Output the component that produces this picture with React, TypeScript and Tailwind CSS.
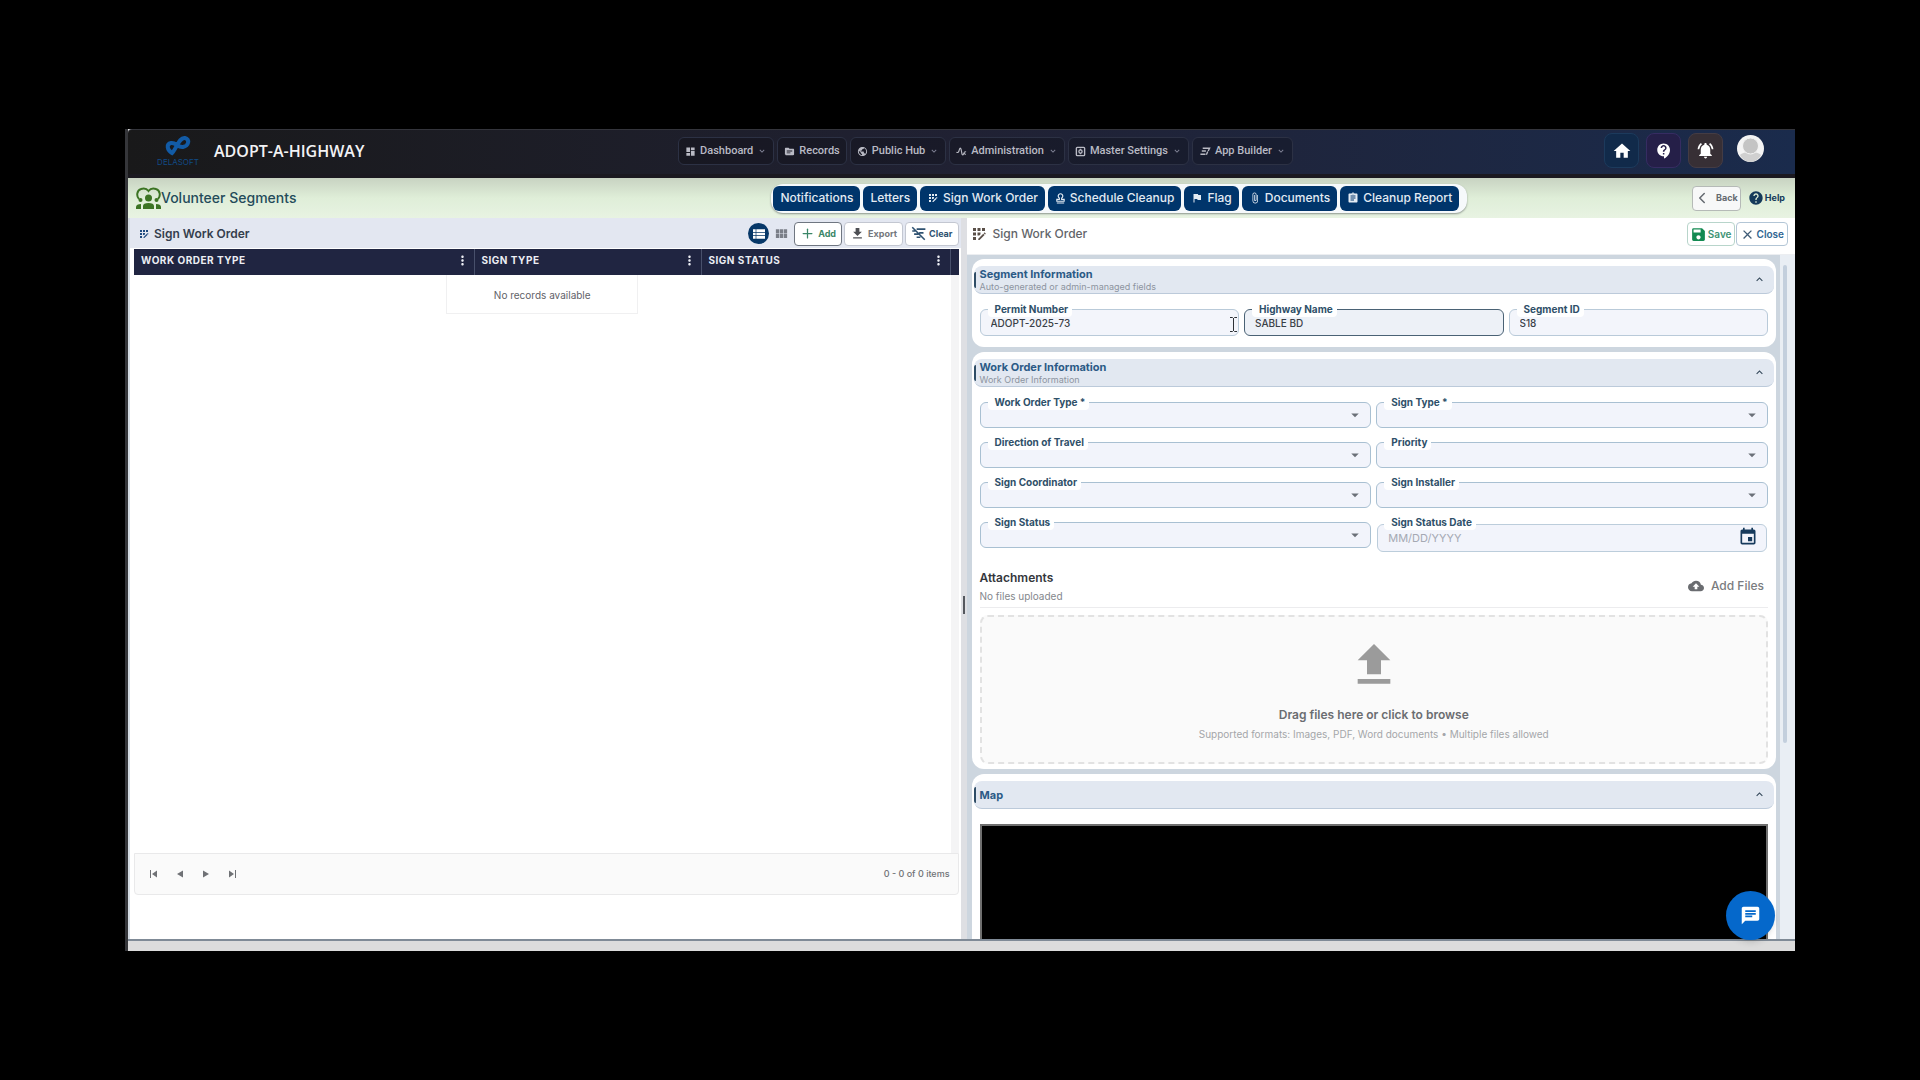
import { useState } from "react";
import type { ReactNode } from "react";
import {
  MdAppRegistration,
  MdArrowDropDown,
  MdAssignment,
  MdAttachFile,
  MdChat,
  MdClose,
  MdCloudUpload,
  MdContactSupport,
  MdDashboard,
  MdEvent,
  MdFileDownload,
  MdFileUpload,
  MdFlag,
  MdHelp,
  MdHome,
  MdKeyboardArrowDown,
  MdKeyboardArrowUp,
  MdMoreVert,
  MdNotificationsActive,
  MdPublic,
  MdSave,
  MdSource,
  MdViewList,
  MdViewModule,
} from "react-icons/md";
import { ChevronLeft, Plus } from "lucide-react";

const navItems = [
  { label: "Dashboard", icon: <MdDashboard />, menu: true },
  { label: "Records", icon: <MdSource />, menu: false },
  { label: "Public Hub", icon: <MdPublic />, menu: true },
  { label: "Administration", icon: <PulseIcon />, menu: true },
  { label: "Master Settings", icon: <SettingsBoxIcon />, menu: true },
  { label: "App Builder", icon: <BuilderIcon />, menu: true },
];

const tabs = [
  { label: "Notifications", icon: null },
  { label: "Letters", icon: null },
  { label: "Sign Work Order", icon: <MdAppRegistration /> },
  { label: "Schedule Cleanup", icon: <StampIcon /> },
  { label: "Flag", icon: <MdFlag /> },
  { label: "Documents", icon: <MdAttachFile /> },
  { label: "Cleanup Report", icon: <MdAssignment /> },
];

function PulseIcon() {
  return (
    <svg width="11" height="11" viewBox="0 0 24 24" fill="none" stroke="currentColor" strokeWidth="2.5">
      <path d="M1 14c4 1 5-1 6-5s3-6 4-2l2 10c1 4 3 3 4-1 1-3 2-4 5-3M18 16l3 3" />
    </svg>
  );
}

function SettingsBoxIcon() {
  return (
    <svg width="11" height="11" viewBox="0 0 24 24" fill="none" stroke="currentColor" strokeWidth="3">
      <rect x="3" y="3" width="18" height="18" rx="2" />
      <circle cx="12" cy="12" r="3.5" />
      <path d="M12 6v3M12 15v3" />
    </svg>
  );
}

function BuilderIcon() {
  return (
    <svg width="12" height="11" viewBox="0 0 24 24" fill="none" stroke="currentColor" strokeWidth="3">
      <path d="M7 5h15l-3 6M5 11h9M2 18h11M18 12l-3 7" />
    </svg>
  );
}

function StampIcon() {
  return (
    <svg width="11" height="12" viewBox="0 0 24 24" fill="none" stroke="currentColor" strokeWidth="2.5">
      <path d="M9.500 12a5 5 0 1 1 5 0v3H20v4H4v-4h5.500zM4 23h16" />
    </svg>
  );
}

function DelasoftLogo() {
  return (
    <div className="flex w-[46px] flex-col items-center text-[#125ba6]">
      <svg width="26" height="21" viewBox="0 0 26 21" fill="none" stroke="currentColor" strokeWidth="4">
        <path d="M7 18C2 15 1 9 6 8c5-1 7 5 12 4 6-1 7-8 2-9C14 2 12 13 7 18z" strokeLinejoin="miter" />
      </svg>
      <span className="text-[8px] leading-3 text-[#114a85]">DELASOFT</span>
    </div>
  );
}

function VolunteersIcon() {
  return (
    <svg width="25" height="22" viewBox="0 0 25 22" className="text-[#3c7424]">
      <path d="M3 12C0 9 1 3 5 2c3-1 6 0 7.500 2C14 2 17 1 20 2c4 1 5 7 2 10" fill="none" stroke="currentColor" strokeWidth="2" />
      <g fill="currentColor">
        <circle cx="12.500" cy="11" r="3.500" />
        <circle cx="4.500" cy="13" r="2" />
        <circle cx="20.500" cy="13" r="2" />
        <path d="M7 22v-3c0-2 2-3 5.500-3s5.500 1 5.500 3v3zM0 22v-2c0-2 2-3 5-3v5zM25 22v-2c0-2-2-3-5-3v5z" />
      </g>
    </svg>
  );
}

function ClearFilterIcon() {
  return (
    <svg width="15" height="15" viewBox="0 0 24 24" fill="none" stroke="currentColor" strokeWidth="2.500">
      <path d="M2 2l20 20M9 5h14M2 8h5M13 11h7M5 13h7M9 18h6" />
    </svg>
  );
}

function TextCursor() {
  return (
    <svg width="9" height="15" viewBox="0 0 9 15" fill="none" stroke="#2d3136" className="pointer-events-none absolute top-2 right-[1px]">
      <path d="M1 0.500h2.500l1 1 1-1H8M1 14.500h2.500l1-1 1 1H8M4.500 1v13" />
    </svg>
  );
}

function PagerIcon({ d }: { d: string }) {
  return (
    <svg width="8" height="8" viewBox="0 0 8 8" fill="currentColor">
      <path d={d} />
    </svg>
  );
}

const pager = [
  { label: "First page", d: "M0 0h1v8H0zM7 0.500v7L2 4z" },
  { label: "Previous page", d: "M7 0.500v7L1 4z" },
  { label: "Next page", d: "M1 0.500v7L7 4z" },
  { label: "Last page", d: "M1 0.500v7L6 4zM7 0h1v8H7z" },
];

function Field({ id, label, children }: { id: string; label: string; children: ReactNode }) {
  return (
    <div className="relative">
      <label htmlFor={id} className="absolute -top-2 left-2 rounded bg-white pr-1 pl-[7px] text-[10px] leading-4 font-bold text-[#2f5069]">
        {label}
      </label>
      {children}
    </div>
  );
}

type TextFieldProps = { id: string; label: string; initial: string; active?: boolean; children?: ReactNode };

function TextField({ id, label, initial, active = false, children }: TextFieldProps) {
  const [value, setValue] = useState(initial);
  const tone = active ? "border-[#4a6275] bg-[#edf1f7]" : "border-[#b9cad9] bg-[#f3f5fb]";

  return (
    <Field id={id} label={label}>
      <input
        id={id}
        value={value}
        onChange={(e) => setValue(e.target.value)}
        className={`block h-[27px] w-full rounded-md border px-[10px] text-[10px] font-medium text-[#3a3f47] outline-none ${tone}`}
      />
      {children}
    </Field>
  );
}

function SelectField({ id, label }: { id: string; label: string }) {
  return (
    <Field id={id} label={label}>
      <select id={id} className="block h-[26px] w-full appearance-none rounded-md border border-[#a9c0d2] bg-[#f2f4fb] px-[10px] text-[10px] text-[#3a3f47]">
        <option value=""></option>
      </select>
      <MdArrowDropDown size={18} className="pointer-events-none absolute top-1 right-[7px] text-[#6b7078]" />
    </Field>
  );
}

function SectionHeader({ title, subtitle }: { title: string; subtitle?: string }) {
  return (
    <div className="mx-[2px] flex h-7 items-center justify-between rounded-lg border-b border-[#bccada] bg-[#e2e8f1] pr-2">
      <div className="flex items-center gap-1">
        <span className="h-4 w-[2px] rounded-l bg-[#2f4d66]" />
        <div>
          <h3 className="text-[11px] leading-[14px] font-bold text-[#2b5a86]">{title}</h3>
          {subtitle && <p className="text-[9px] leading-3 text-[#8d949f]">{subtitle}</p>}
        </div>
      </div>
      <button type="button" aria-label={`Collapse ${title}`} className="text-[#34485a]">
        <MdKeyboardArrowUp size={13} />
      </button>
    </div>
  );
}

function ColumnHead({ label, width }: { label: string; width: string }) {
  return (
    <th className={`border-r border-[#48506b] p-0 pr-1 pb-[3px] pl-[7px] ${width}`}>
      <div className="flex items-center justify-between">
        <span>{label}</span>
        <MdMoreVert size={15} />
      </div>
    </th>
  );
}

function Header() {
  return (
    <header className="flex h-[49px] items-start justify-between rounded-tl border-t border-[#34353c] bg-linear-to-r from-[#19191a] via-[#202133] to-[#1a2b4c] shadow-[inset_0_-4px_0_#1b1920]">
      <div className="flex flex-1 items-center gap-[13px] pt-[5px] pl-[27px]">
        <DelasoftLogo />
        <h1 className="pb-[2px] font-['Open_Sans',sans-serif] text-[16px] font-semibold text-[#f2f2f4]">ADOPT-A-HIGHWAY</h1>
      </div>

      <nav className="flex gap-[3px] pt-[7px] pl-[52px] font-['Roboto',sans-serif]">
        {navItems.map((item) => (
          <button
            key={item.label}
            type="button"
            className="flex h-7 items-center gap-1 rounded-md border border-[#2c3144] bg-black/20 px-[6px] text-[11px] font-medium text-[#b9bac4]"
          >
            {item.icon}
            {item.label}
            {item.menu && <MdKeyboardArrowDown size={10} className="text-[#85879a]" />}
          </button>
        ))}
      </nav>

      <div className="flex flex-1 items-start justify-end gap-[7px] pt-[3px] pr-[31px] text-white">
        <button type="button" aria-label="Home" className="flex size-[35px] items-center justify-center rounded-lg border border-[#1c3a5c] bg-[#112a4a]">
          <MdHome size={20} />
        </button>
        <button type="button" aria-label="Support" className="flex size-[35px] items-center justify-center rounded-lg border border-[#362c62] bg-[#251f48]">
          <MdContactSupport size={18} />
        </button>
        <button type="button" aria-label="Alerts" className="flex size-[35px] items-center justify-center rounded-lg border border-[#443c44] bg-[#372f35]">
          <MdNotificationsActive size={19} />
        </button>
        <button type="button" aria-label="Profile" className="mt-[2px] ml-[7px]">
          <svg width="27" height="27" viewBox="0 0 27 27">
            <circle cx="13.500" cy="13.500" r="13.500" fill="#f4f4f4" />
            <path d="M3 20c3-4 18-4 21 0-2 4-6 7-10.500 7S5 24 3 20z" fill="#d0d0d0" />
            <circle cx="13.500" cy="11" r="8" fill="#c4c4c4" stroke="#f4f4f4" />
          </svg>
        </button>
      </div>
    </header>
  );
}

function SegmentBar() {
  return (
    <div className="flex h-10 items-center justify-between bg-linear-to-b from-[#c8d3c2] via-[#dfeed8] to-[#e8f3e2]">
      <div className="flex flex-[2] items-center pl-2">
        <VolunteersIcon />
        <h2 className="text-[14px] leading-5 font-medium text-[#244b5a]">Volunteer Segments</h2>
      </div>

      <div className="flex gap-[3px] rounded-xl bg-[#f6f9fb] py-[2px] pr-2 pl-[2px] shadow-[0_1px_2px_#8b948c]">
        {tabs.map((tab) => (
          <button key={tab.label} type="button" className="flex h-[25px] items-center gap-1 rounded-md bg-[#00356b] px-[7px] text-[12px] font-medium text-[#e3ebf3]">
            {tab.icon}
            {tab.label}
          </button>
        ))}
      </div>

      <div className="flex flex-1 items-center justify-end gap-[7px] pr-[10px] text-[9px] font-bold">
        <button type="button" className="flex h-[25px] items-center gap-[5px] rounded border border-[#b5bab7] bg-[#f7f8f8] pr-[2px] text-[#646a70]">
          <ChevronLeft size={18} />
          Back
        </button>
        <button type="button" className="flex items-center gap-[1px] text-[#153a5a]">
          <MdHelp size={16} />
          Help
        </button>
      </div>
    </div>
  );
}

function WorkOrderList() {
  const toolButton = "flex h-6 items-center gap-[3px] rounded border px-[5px]";

  return (
    <section className="flex w-[calc(50%-1px)] flex-col border-l-2 border-[#d5dce4] bg-white">
      <div className="flex h-[30px] items-center justify-between bg-[#e3e7f1] pt-[1px] pr-[2px] pl-2">
        <div className="flex items-center gap-1">
          <MdAppRegistration size={12} className="text-[#1f4b80]" />
          <h2 className="text-[12px] font-semibold text-[#353e4d]">Sign Work Order</h2>
        </div>
        <div className="flex items-center gap-[2px] text-[9px] font-bold">
          <button type="button" aria-label="List view" className="flex size-[21px] items-center justify-center rounded-full bg-[#073868] text-white">
            <MdViewList size={16} />
          </button>
          <button type="button" aria-label="Card view" className="px-[3px] text-[#7b7f88]">
            <MdViewModule size={15} />
          </button>
          <button type="button" className={`${toolButton} border-[#6f7681] bg-white text-[#3a8668]`}>
            <Plus size={15} />
            Add
          </button>
          <button type="button" className={`${toolButton} border-[#c3c7d1] bg-white text-[#74777c]`}>
            <MdFileDownload size={15} className="text-[#4d4f54]" />
            Export
          </button>
          <button type="button" className={`${toolButton} border-[#c3c7d1] bg-white text-[#2e5170]`}>
            <ClearFilterIcon />
            Clear
          </button>
        </div>
      </div>

      <div className="mr-[2px] ml-1 flex flex-1 flex-col">
        <table className="mt-[1px] w-full table-fixed">
          <thead>
            <tr className="h-[26px] bg-[#202541] text-left text-[10px] tracking-wider text-[#eceef4]">
              <ColumnHead label="WORK ORDER TYPE" width="w-[340px]" />
              <ColumnHead label="SIGN TYPE" width="w-[227px]" />
              <ColumnHead label="SIGN STATUS" width="w-auto" />
              <th className="w-2 p-0"></th>
            </tr>
          </thead>
          <tbody>
            <tr>
              <td colSpan={3} className="p-0">
                <div className="mx-auto flex h-[39px] w-[192px] items-center justify-center border border-t-0 border-[#f0f0f1] pt-[2px] text-[10px] text-[#5f6268]">
                  No records available
                </div>
              </td>
              <td className="bg-[#f4f4f5] p-0"></td>
            </tr>
          </tbody>
        </table>
        <div className="flex-1 border-r-8 border-[#f4f4f5]" />
        <div className="mb-11 flex h-[42px] items-center justify-between rounded-b border border-[#e9e9ea] bg-[#fafafa] pr-2 pl-[11px] text-[#6f7175]">
          <div className="flex gap-[10px]">
            {pager.map((item) => (
              <button key={item.label} type="button" aria-label={item.label} className="flex size-4 items-center justify-center">
                <PagerIcon d={item.d} />
              </button>
            ))}
          </div>
          <span className="text-[9px] font-medium">0 - 0 of 0 items</span>
        </div>
      </div>
    </section>
  );
}

function WorkOrderForm() {
  return (
    <section className="flex min-w-0 flex-1 flex-col bg-[#fbfcfe]">
      <div className="flex h-[37px] items-center justify-between border-b border-[#eceef1] bg-white pr-[7px] pb-1 pl-[3px]">
        <div className="flex items-center gap-[5px]">
          <MdAppRegistration size={18} className="text-[#5a4f48]" />
          <h2 className="text-[12px] font-medium text-[#626469]">Sign Work Order</h2>
        </div>
        <div className="flex gap-[1px] text-[10px] font-semibold">
          <button type="button" className="flex h-6 items-center gap-[1px] rounded border border-[#b8d5cb] bg-white px-[2px] text-[#3e9475]">
            <MdSave size={17} className="text-[#138a52]" />
            Save
          </button>
          <button type="button" className="flex h-6 items-center gap-[2px] rounded border border-[#b3c6d6] bg-white px-[3px] text-[#2f6692]">
            <MdClose size={15} className="text-[#3f5c77]" />
            Close
          </button>
        </div>
      </div>

      <div className="flex flex-1">
        <div className="flex min-w-0 flex-1 flex-col gap-[5px] bg-[#cdd6df] pt-1 pr-1 pl-[5px]">
          <div className="rounded-xl bg-white pt-[7px] pb-[11px]">
            <SectionHeader title="Segment Information" subtitle="Auto-generated or admin-managed fields" />
            <div className="mt-[15px] grid grid-cols-3 gap-[5px] px-2">
              <TextField id="permit-number" label="Permit Number" initial="ADOPT-2025-73">
                <TextCursor />
              </TextField>
              <TextField id="highway-name" label="Highway Name" initial="SABLE BD" active />
              <TextField id="segment-id" label="Segment ID" initial="S18" />
            </div>
          </div>

          <div className="rounded-xl bg-white pt-[7px] pb-[5px]">
            <SectionHeader title="Work Order Information" subtitle="Work Order Information" />
            <div className="mt-[15px] grid grid-cols-2 gap-x-[5px] gap-y-[14px] px-2">
              <SelectField id="work-order-type" label="Work Order Type *" />
              <SelectField id="sign-type" label="Sign Type *" />
              <SelectField id="direction" label="Direction of Travel" />
              <SelectField id="priority" label="Priority" />
              <SelectField id="coordinator" label="Sign Coordinator" />
              <SelectField id="installer" label="Sign Installer" />
              <SelectField id="sign-status" label="Sign Status" />
              <Field id="status-date" label="Sign Status Date">
                <div className="px-[1px] pt-[2px]">
                  <input
                    id="status-date"
                    placeholder="MM/DD/YYYY"
                    className="block h-7 w-full rounded-md border border-[#bccddb] bg-[#f2f4fb] px-[10px] text-[11px] placeholder:text-[#a5a9b3]"
                  />
                </div>
                <MdEvent size={20} className="absolute top-[5px] right-[10px] text-[#163a5c]" />
              </Field>
            </div>

            <div className="mx-2 mt-4 flex items-center justify-between border-b border-[#ececee] pb-[3px]">
              <div>
                <h3 className="text-[12px] leading-5 font-semibold text-[#34373c]">Attachments</h3>
                <p className="text-[10px] leading-4 text-[#84878c]">No files uploaded</p>
              </div>
              <button type="button" className="flex items-center gap-[7px] pr-1 text-[12px] font-medium text-[#7a7c80]">
                <MdCloudUpload size={16} className="text-[#6a6c70]" />
                Add Files
              </button>
            </div>

            <button type="button" className="mx-2 mt-[7px] flex h-[149px] w-[calc(100%-16px)] flex-col items-center rounded-lg border-2 border-dashed border-[#e2e2e2] bg-[#fafafa] pt-5">
              <MdFileUpload size={56} className="text-[#9b9b9b]" />
              <span className="mt-3 text-[12px] leading-5 font-semibold text-[#6b6d71]">Drag files here or click to browse</span>
              <span className="text-[10px] leading-[18px] text-[#a4a6a9]">Supported formats: Images, PDF, Word documents • Multiple files allowed</span>
            </button>
          </div>

          <div className="flex flex-1 flex-col rounded-t-xl bg-white pt-[7px]">
            <SectionHeader title="Map" />
            <div className="mx-2 mt-[15px] min-h-24 flex-1 border-2 border-b-0 border-[#6f6f6f] bg-black" />
          </div>
        </div>

        <div className="flex w-[15px] flex-col bg-[#e9eef4] pt-[10px] pl-[3px]">
          <div className="h-[478px] w-1 rounded-full bg-[#c3cfdd]" />
        </div>
      </div>
    </section>
  );
}

export default function App() {
  return (
    <div className="flex min-h-screen flex-col bg-black px-[125px] py-[129px] font-['Inter',sans-serif]">
      <div className="relative flex flex-1 flex-col border-l-[3px] border-[#35363a] bg-[#dcdcdc] pb-[10px]">
        <Header />
        <main className="flex flex-1 flex-col border-b-2 border-[#7f8a96] bg-white">
          <SegmentBar />
          <div className="flex flex-1">
            <WorkOrderList />
            <div className="flex w-[6px] items-center justify-center bg-[#dedfe3]">
              <span className="mt-[52px] h-[18px] w-[2px] bg-[#55585e]" />
            </div>
            <WorkOrderForm />
          </div>
        </main>
        <button type="button" aria-label="Open chat" className="absolute right-5 bottom-[11px] flex size-[49px] items-center justify-center rounded-full bg-[#0568cb] text-white shadow-md">
          <MdChat size={21} />
        </button>
      </div>
    </div>
  );
}
